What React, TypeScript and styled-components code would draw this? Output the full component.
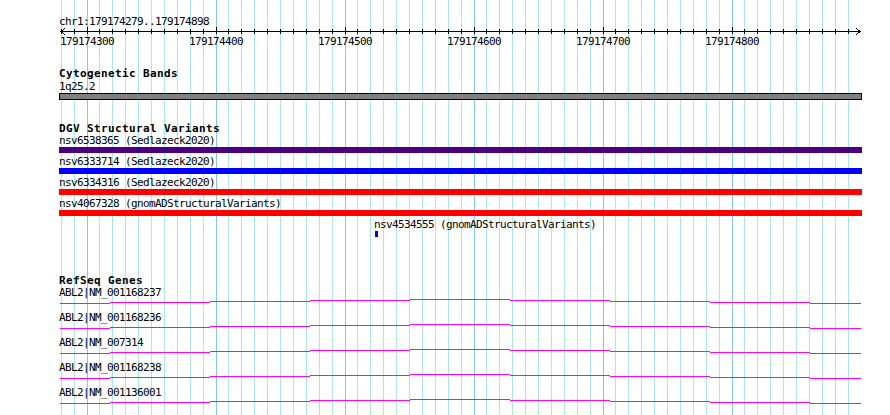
import styled, { createGlobalStyle } from 'styled-components';

const GlobalStyle = createGlobalStyle`
	html,
	body {
		margin: 0;
		padding: 0;
		background: #fff;
	}
	body {
		width: 890px;
		height: 415px;
		overflow: hidden;
	}
`;

// page x of the panel's left edge, and the scale of the view
const ORIGIN = 59;
const PANEL_W = 803;
const MAJOR_X = 87; // x of 179174300
const PX_PER_10BP = 12.9;

const xOf = (bp: number) => MAJOR_X + ((bp - 179174300) / 10) * PX_PER_10BP;

const gridLines = Array.from({ length: 62 }, (_, i) => {
	const bp = 179174280 + i * 10;
	return { x: Math.floor(xOf(bp)), major: bp % 100 === 0 };
});

const majorTicks = [179174300, 179174400, 179174500, 179174600, 179174700, 179174800];

const Page = styled.div`
	position: relative;
	width: 890px;
	height: 415px;
	overflow: hidden;
	background: #fff;
	color: #000;
	font-family: 'DejaVu Sans Mono', 'Liberation Mono', monospace;
	font-size: 11px;
`;

const Grid = styled.svg`
	position: absolute;
	top: 0;
	left: 0;
	z-index: 0;
`;

const Panel = styled.div`
	position: relative;
	z-index: 1;
	width: ${PANEL_W}px;
	padding: 16px 0 0 ${ORIGIN}px;
`;

const Locus = styled.div`
	letter-spacing: -0.62px;
	line-height: 11px;
	height: 11px;
	white-space: nowrap;
`;

const RulerBar = styled.svg`
	display: block;
`;

const TickLabels = styled.div`
	position: relative;
	height: 14px;
`;

const TickLabel = styled.span`
	position: absolute;
	top: 0;
	letter-spacing: -0.62px;
	line-height: 13px;
	white-space: nowrap;
`;

const Track = styled.section<{ $gap: number }>`
	display: flex;
	flex-direction: column;
	margin-top: ${(p) => p.$gap}px;
`;

const TrackTitle = styled.div`
	font-weight: bold;
	letter-spacing: 0.38px;
	line-height: 13px;
	height: 13px;
	white-space: nowrap;
`;

const BandLabel = styled.div`
	letter-spacing: -0.62px;
	line-height: 13px;
	height: 13px;
`;

const BandBar = styled.div`
	box-sizing: border-box;
	height: 7px;
	border: 1px solid #000;
	background: #808080;
`;

const FeatureRow = styled.div<{ $offset: number }>`
	padding: 0 0 3px ${(p) => p.$offset}px;
`;

const FeatureLabel = styled.div<{ $lh: number }>`
	letter-spacing: -0.62px;
	line-height: ${(p) => p.$lh}px;
	height: ${(p) => p.$lh}px;
	white-space: nowrap;
`;

const FeatureBar = styled.div<{ $color: string; $width: number; $inset: number }>`
	height: 6px;
	width: ${(p) => p.$width}px;
	margin-left: ${(p) => p.$inset}px;
	background: ${(p) => p.$color};
`;

const GeneRow = styled.div`
	padding-bottom: 8px;
`;

const GeneLine = styled.svg`
	display: block;
`;

const variants = [
	{ name: 'nsv6538365 (Sedlazeck2020)', color: '#4b0082', start: 59, end: 862 },
	{ name: 'nsv6333714 (Sedlazeck2020)', color: '#0000ff', start: 59, end: 862 },
	{ name: 'nsv6334316 (Sedlazeck2020)', color: '#ff0000', start: 59, end: 862 },
	{ name: 'nsv4067328 (gnomADStructuralVariants)', color: '#ff0000', start: 59, end: 862 },
	{ name: 'nsv4534555 (gnomADStructuralVariants)', color: '#0000ff', start: 375, end: 378, labelAt: 374 },
];

const genes = ['ABL2|NM_001168237', 'ABL2|NM_001168236', 'ABL2|NM_007314', 'ABL2|NM_001168238', 'ABL2|NM_001136001'];

// intron line: shallow hat clipped by the view, drawn in 1px steps
const hatSteps = [
	[60, 110, 5],
	[110, 210, 4],
	[210, 310, 3],
	[310, 410, 2],
	[410, 510, 1],
	[510, 610, 2],
	[610, 710, 3],
	[710, 810, 4],
	[810, 861, 5],
];

function Ruler() {
	const ticks = gridLines.filter((l) => l.x > ORIGIN && l.x < 856);
	return (
		<>
			<RulerBar width={PANEL_W} height={8} shapeRendering='crispEdges'>
				<rect x={1} y={4} width={801} height={1} fill='#000' />
				{ticks.map((t) => (
					<rect
						key={t.x}
						x={t.x - ORIGIN}
						y={t.major ? 0 : 2}
						width={1}
						height={t.major ? 7 : 5}
						fill='#000'
					/>
				))}
				<polyline points='6,1.5 1.5,4.5 6,7.5' fill='none' stroke='#000' strokeWidth={1} />
				<polyline points='797,1.5 801.5,4.5 797,7.5' fill='none' stroke='#000' strokeWidth={1} />
			</RulerBar>
			<TickLabels>
				{majorTicks.map((bp) => (
					<TickLabel key={bp} style={{ left: Math.round(xOf(bp)) - ORIGIN - 27 }}>
						{bp}
					</TickLabel>
				))}
			</TickLabels>
		</>
	);
}

export default function App() {
	return (
		<Page>
			<GlobalStyle />
			<Grid width={890} height={415} shapeRendering='crispEdges'>
				{gridLines.map((l) => (
					<rect
						key={l.x}
						x={l.x}
						y={0}
						width={1}
						height={415}
						fill={l.major ? '#80c8f0' : '#a8e8ee'}
					/>
				))}
			</Grid>
			<Panel>
				<Locus>chr1:179174279..179174898</Locus>
				<Ruler />

				<Track $gap={18}>
					<TrackTitle>Cytogenetic Bands</TrackTitle>
					<BandLabel>1q25.2</BandLabel>
					<BandBar />
				</Track>

				<Track $gap={22}>
					<TrackTitle>DGV Structural Variants</TrackTitle>
					{variants.map((v) => {
						const labelAt = v.labelAt ?? ORIGIN;
						return (
							<FeatureRow key={v.name} $offset={labelAt - ORIGIN}>
								<FeatureLabel $lh={12}>{v.name}</FeatureLabel>
								<FeatureBar
									$color={v.color}
									$width={v.end - v.start}
									$inset={v.start - labelAt}
								/>
							</FeatureRow>
						);
					})}
				</Track>

				<Track $gap={34}>
					<TrackTitle>RefSeq Genes</TrackTitle>
					{genes.map((g) => (
						<GeneRow key={g}>
							<FeatureLabel $lh={11}>{g}</FeatureLabel>
							<GeneLine width={PANEL_W} height={6} shapeRendering='crispEdges'>
								{hatSteps.map(([x1, x2, y]) => (
									<rect
										key={x1}
										x={x1 - ORIGIN}
										y={y}
										width={x2 - x1}
										height={1}
										fill='#ff00ff'
									/>
								))}
							</GeneLine>
						</GeneRow>
					))}
				</Track>
			</Panel>
		</Page>
	);
}
